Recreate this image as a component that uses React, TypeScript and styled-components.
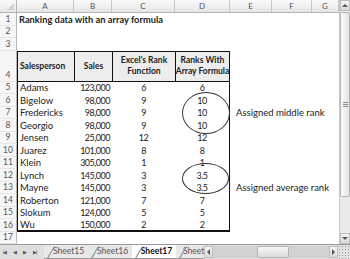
import React from 'react';
import styled, { createGlobalStyle, css } from 'styled-components';

const GlobalStyle = createGlobalStyle`
  html, body { margin: 0; padding: 0; background: #fff; }
  body { width: 350px; height: 259px; overflow: hidden; }
  * { box-sizing: border-box; }
`;

const COLS = '17px 57px 38px 63px 55px 42px 40px 1fr';
const ROW_H = 12.5;

type Rec = { name: string; sales: string; rank: string; arr: string; note?: string };

const records: Rec[] = [
  { name: 'Adams', sales: '123,000', rank: '6', arr: '6' },
  { name: 'Bigelow', sales: '98,000', rank: '9', arr: '10' },
  { name: 'Fredericks', sales: '98,000', rank: '9', arr: '10', note: 'Assigned middle rank' },
  { name: 'Georgio', sales: '98,000', rank: '9', arr: '10' },
  { name: 'Jensen', sales: '25,000', rank: '12', arr: '12' },
  { name: 'Juarez', sales: '101,000', rank: '8', arr: '8' },
  { name: 'Klein', sales: '305,000', rank: '1', arr: '1' },
  { name: 'Lynch', sales: '145,000', rank: '3', arr: '3.5' },
  { name: 'Mayne', sales: '145,000', rank: '3', arr: '3.5', note: 'Assigned average rank' },
  { name: 'Roberton', sales: '121,000', rank: '7', arr: '7' },
  { name: 'Slokum', sales: '124,000', rank: '5', arr: '5' },
  { name: 'Wu', sales: '150,000', rank: '2', arr: '2' },
];

const App: React.FC = () => {
  return (
    <Window>
      <GlobalStyle />
      <SheetArea>
        <Grid>
          <HeadRow>
            <Corner />
            {['A', 'B', 'C', 'D', 'E', 'F', 'G'].map((c) => (
              <ColHead key={c}>{c}</ColHead>
            ))}
          </HeadRow>

          <Row $h={ROW_H}>
            <RowNum>1</RowNum>
            <Cell $title>Ranking data with an array formula</Cell>
          </Row>
          <Row $h={ROW_H}>
            <RowNum>2</RowNum>
          </Row>
          <Row $h={ROW_H}>
            <RowNum>3</RowNum>
          </Row>

          <Row $h={31}>
            <RowNum $bottom>4</RowNum>
            <HeadCell $align="left">Salesperson</HeadCell>
            <HeadCell>Sales</HeadCell>
            <HeadCell>Excel's Rank<br />Function</HeadCell>
            <HeadCell $last>Ranks With<br />Array Formula</HeadCell>
          </Row>

          {records.map((r, i) => {
            const last = i === records.length - 1;
            return (
              <Row key={r.name} $h={ROW_H}>
                <RowNum>{i + 5}</RowNum>
                <Cell $left $bottom={last}>{r.name}</Cell>
                <Cell $align="right" $num $bottom={last}>{r.sales}</Cell>
                <Cell $align="center" $num $bottom={last}>{r.rank}</Cell>
                <Cell $align="center" $num $right $bottom={last}>{r.arr}</Cell>
                {r.note && <Cell $overflow>{r.note}</Cell>}
              </Row>
            );
          })}

          <Row $h={ROW_H}>
            <RowNum>17</RowNum>
          </Row>

          <Ellipse style={{ left: 182, top: 92, width: 48, height: 42 }} />
          <Ellipse style={{ left: 182, top: 163, width: 47, height: 31 }} />
        </Grid>

        <VScroll>
          <ScrollBtn>
            <Arrow $dir="up" />
          </ScrollBtn>
          <VThumb>
            <Grip />
          </VThumb>
          <VTrack />
          <ScrollBtn>
            <Arrow $dir="down" />
          </ScrollBtn>
        </VScroll>
      </SheetArea>

      <TabBar>
        <Nav>
          <NavBtn>|◀</NavBtn>
          <NavBtn>◀</NavBtn>
          <NavBtn>▶</NavBtn>
          <NavBtn>▶|</NavBtn>
        </Nav>
        <Tabs>
          <Tab>Sheet15</Tab>
          <Tab>Sheet16</Tab>
          <Tab $active>Sheet17</Tab>
          <Tab $cut>Sheet</Tab>
        </Tabs>
        <HScroll>
          <ScrollBtn $h>
            <Arrow $dir="left" />
          </ScrollBtn>
          <HTrack>
            <HThumb />
          </HTrack>
          <ScrollBtn $h>
            <Arrow $dir="right" />
          </ScrollBtn>
        </HScroll>
        <Resize />
      </TabBar>
    </Window>
  );
};

export default App;

// Styled components
const Window = styled.div`
  width: 350px;
  height: 259px;
  display: flex;
  flex-direction: column;
  font-family: Lato, 'Liberation Sans', sans-serif;
  color: #222;
  overflow: hidden;
`;

const SheetArea = styled.div`
  flex: 1;
  display: flex;
  min-height: 0;
`;

const Grid = styled.div`
  position: relative;
  flex: 1;
  overflow: hidden;
`;

const HeadRow = styled.div`
  display: grid;
  grid-template-columns: ${COLS};
  height: 13px;
  background: linear-gradient(#fafafa, #e6e6e6);
  border-bottom: 1px solid #b5b5b5;
`;

const Corner = styled.div`
  position: relative;
  border-right: 1px solid #b5b5b5;
  &::after {
    content: '';
    position: absolute;
    right: 2px;
    bottom: 2px;
    border-left: 7px solid transparent;
    border-bottom: 7px solid #d2d2d2;
  }
`;

const ColHead = styled.div`
  display: flex;
  align-items: center;
  justify-content: center;
  font-size: 8px;
  color: #555;
  border-right: 1px solid #c8c8c8;
`;

const Row = styled.div<{ $h: number }>`
  display: grid;
  grid-template-columns: ${COLS};
  height: ${(p) => p.$h}px;
`;

const RowNum = styled.div<{ $bottom?: boolean }>`
  display: flex;
  align-items: ${(p) => (p.$bottom ? 'flex-end' : 'center')};
  justify-content: center;
  font-size: 8.5px;
  color: #555;
  background: #f6f6f6;
  border-right: 1px solid #b5b5b5;
  border-bottom: 1px solid #e6e6e6;
  padding-bottom: ${(p) => (p.$bottom ? '1px' : '0')};
`;

const border = '1px solid #111';

const Cell = styled.div<{
  $align?: 'left' | 'right' | 'center';
  $left?: boolean;
  $right?: boolean;
  $bottom?: boolean;
  $title?: boolean;
  $overflow?: boolean;
  $num?: boolean;
}>`
  display: flex;
  align-items: center;
  justify-content: ${(p) =>
    p.$align === 'right' ? 'flex-end' : p.$align === 'center' ? 'center' : 'flex-start'};
  padding: 0 2px;
  font-size: 9.5px;
  color: #222;
  white-space: nowrap;
  overflow: visible;
  ${(p) =>
    p.$num &&
    css`
      font-size: 9px;
      letter-spacing: -0.5px;
    `}
  ${(p) => p.$left && css`border-left: ${border};`}
  ${(p) => p.$right && css`border-right: ${border};`}
  ${(p) => p.$bottom && css`border-bottom: 2px solid #111;`}
  ${(p) =>
    p.$title &&
    css`
      font-size: 9.3px;
      font-weight: 700;
      grid-column: 2 / span 4;
    `}
  ${(p) =>
    p.$overflow &&
    css`
      grid-column: 6 / span 3;
      padding-left: 6px;
    `}
`;

const HeadCell = styled.div<{ $align?: 'left' | 'center'; $last?: boolean }>`
  display: flex;
  align-items: center;
  justify-content: ${(p) => (p.$align === 'left' ? 'flex-start' : 'center')};
  text-align: ${(p) => p.$align ?? 'center'};
  padding: 0 2px;
  font-size: 8.5px;
  font-weight: 700;
  line-height: 11px;
  color: #222;
  background: #ededed;
  border-top: ${border};
  border-bottom: ${border};
  border-left: ${border};
  ${(p) => p.$last && css`border-right: ${border};`}
  white-space: nowrap;
`;

const Ellipse = styled.div`
  position: absolute;
  border: 1px solid #333;
  border-radius: 50%;
  pointer-events: none;
`;

const VScroll = styled.div`
  width: 11px;
  display: flex;
  flex-direction: column;
  background: #e9e9e9;
  border-left: 1px solid #c9c9c9;
`;

const ScrollBtn = styled.div<{ $h?: boolean }>`
  flex: none;
  width: ${(p) => (p.$h ? '9px' : '100%')};
  height: ${(p) => (p.$h ? '100%' : '11px')};
  display: flex;
  align-items: center;
  justify-content: center;
  background: linear-gradient(#f4f4f4, #dadada);
  border: 1px solid #bdbdbd;
`;

const Arrow = styled.div<{ $dir: 'up' | 'down' | 'left' | 'right' }>`
  width: 0;
  height: 0;
  ${(p) =>
    p.$dir === 'up'
      ? css`border-left: 3px solid transparent; border-right: 3px solid transparent; border-bottom: 3px solid #555;`
      : p.$dir === 'down'
      ? css`border-left: 3px solid transparent; border-right: 3px solid transparent; border-top: 3px solid #555;`
      : p.$dir === 'left'
      ? css`border-top: 3px solid transparent; border-bottom: 3px solid transparent; border-right: 3px solid #555;`
      : css`border-top: 3px solid transparent; border-bottom: 3px solid transparent; border-left: 3px solid #555;`}
`;

const VThumb = styled.div`
  flex: none;
  height: 185px;
  margin: 1px 0;
  display: flex;
  align-items: center;
  justify-content: center;
  background: linear-gradient(90deg, #fdfdfd, #e4e4e4);
  border: 1px solid #b4b4b4;
  border-radius: 2px;
`;

const Grip = styled.div`
  width: 5px;
  height: 5px;
  background: repeating-linear-gradient(#8a8a8a 0 1px, transparent 1px 2px);
`;

const VTrack = styled.div`
  flex: 1;
`;

const TabBar = styled.div`
  height: 15px;
  flex: none;
  display: flex;
  align-items: stretch;
  background: #dedede;
  border-top: 1px solid #9a9a9a;
`;

const Nav = styled.div`
  width: 44px;
  display: flex;
  align-items: center;
  gap: 3px;
  padding-left: 3px;
`;

const NavBtn = styled.span`
  font-size: 5px;
  color: #555;
  letter-spacing: -1px;
  width: 7px;
`;

const Tabs = styled.div`
  display: flex;
  width: 160px;
  overflow: hidden;
`;

const Tab = styled.div<{ $active?: boolean; $cut?: boolean }>`
  position: relative;
  flex: none;
  width: ${(p) => (p.$cut ? '28px' : '44px')};
  display: flex;
  align-items: center;
  justify-content: ${(p) => (p.$cut ? 'flex-start' : 'center')};
  padding-left: ${(p) => (p.$cut ? '7px' : '5px')};
  font-size: 8.5px;
  color: ${(p) => (p.$active ? '#111' : '#555')};
  font-weight: ${(p) => (p.$active ? 700 : 400)};
  background: ${(p) => (p.$active ? '#fff' : '#e8e8e8')};
  margin-top: -1px;
  border-bottom: 1px solid #9a9a9a;
  &::before {
    content: '';
    position: absolute;
    left: 2px;
    top: 0;
    height: 16px;
    width: 1px;
    background: #8a8a8a;
    transform: rotate(30deg);
    transform-origin: bottom left;
  }
`;

const HScroll = styled.div`
  flex: 1;
  display: flex;
  padding: 1px 0;
`;

const HTrack = styled.div`
  flex: 1;
  display: flex;
  align-items: stretch;
  background: #d2d2d2;
  padding: 0 0 0 44px;
`;

const HThumb = styled.div`
  width: 32px;
  background: linear-gradient(#f6f6f6, #dcdcdc);
  border: 1px solid #b4b4b4;
  border-radius: 2px;
`;

const Resize = styled.div`
  width: 12px;
  background:
    radial-gradient(circle, #999 0.7px, transparent 0.8px) 0 0 / 3px 3px,
    #e2e2e2;
`;
